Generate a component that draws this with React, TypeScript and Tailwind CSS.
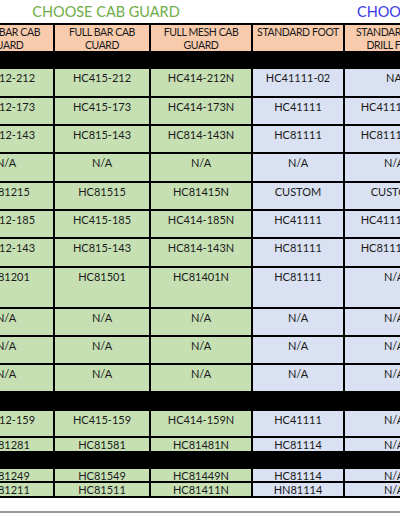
import React from 'react';

type Row =
  | { kind: 'bar'; h: number }
  | { kind: 'data'; h: number; cells: string[]; small?: boolean };

const widths = ['w-[96px]', 'w-[96px]', 'w-[102px]', 'w-[92px]', 'w-[100px]'];
const fills = ['bg-[#c6e0b4]', 'bg-[#c6e0b4]', 'bg-[#c6e0b4]', 'bg-[#d9e1f2]', 'bg-[#d9e1f2]'];

const rows: Row[] = [
  { kind: 'bar', h: 16 },
  { kind: 'data', h: 29, cells: ['HC412-212', 'HC415-212', 'HC414-212N', 'HC41111-02', 'NA'] },
  { kind: 'data', h: 28, cells: ['HC412-173', 'HC415-173', 'HC414-173N', 'HC41111', 'HC41111-PD'] },
  { kind: 'data', h: 28, cells: ['HC812-143', 'HC815-143', 'HC814-143N', 'HC81111', 'HC81111-PD'] },
  { kind: 'data', h: 29, cells: ['N/A', 'N/A', 'N/A', 'N/A', 'N/A'] },
  { kind: 'data', h: 28, cells: ['HC81215', 'HC81515', 'HC81415N', 'CUSTOM', 'CUSTOM'] },
  { kind: 'data', h: 28, cells: ['HC412-185', 'HC415-185', 'HC414-185N', 'HC41111', 'HC41111-PD'] },
  { kind: 'data', h: 29, cells: ['HC812-143', 'HC815-143', 'HC814-143N', 'HC81111', 'HC81111-PD'] },
  { kind: 'data', h: 41, cells: ['HC81201', 'HC81501', 'HC81401N', 'HC81111', 'N/A'] },
  { kind: 'data', h: 28, cells: ['N/A', 'N/A', 'N/A', 'N/A', 'N/A'] },
  { kind: 'data', h: 28, cells: ['N/A', 'N/A', 'N/A', 'N/A', 'N/A'] },
  { kind: 'data', h: 28, cells: ['N/A', 'N/A', 'N/A', 'N/A', 'N/A'] },
  { kind: 'bar', h: 18 },
  { kind: 'data', h: 27, cells: ['HC412-159', 'HC415-159', 'HC414-159N', 'HC41111', 'N/A'] },
  { kind: 'data', h: 15, small: true, cells: ['HC81281', 'HC81581', 'HC81481N', 'HC81114', 'N/A'] },
  { kind: 'bar', h: 16 },
  { kind: 'data', h: 14, small: true, cells: ['HC81249', 'HC81549', 'HC81449N', 'HC81114', 'N/A'] },
  { kind: 'data', h: 15, small: true, cells: ['HC81211', 'HC81511', 'HC81411N', 'HN81114', 'N/A'] },
];

const headers = [
  ['HALF BAR CAB', 'GUARD'],
  ['FULL BAR CAB', 'CUARD'],
  ['FULL MESH CAB', 'GUARD'],
  ['STANDARD FOOT'],
  ['STANDARD PRE-', 'DRILL FOOT'],
];

export default function App() {
  return (
    <div
      className="w-[400px] h-[516px] overflow-hidden bg-white text-[#1a1a1a]"
      style={{ fontFamily: 'Lato, "Liberation Sans", sans-serif' }}
    >
      <div className="ml-[-41px] w-[486px]">
        {/* titles */}
        <div className="flex h-[23px] items-center">
          <div className="w-[294px] shrink-0 text-center text-[14.5px] text-[#70ad47]">CHOOSE CAB GUARD</div>
          <div className="shrink-0 pl-[104px] text-[14.5px] text-[#3a3ae6] whitespace-nowrap">CHOOSE FOOT</div>
        </div>

        {/* header */}
        <div className="flex h-[30px] border-y-2 border-black">
          {headers.map((lines, i) => (
            <div
              key={i}
              className={`${widths[i]} shrink-0 border-r-2 border-black bg-[#f8cbad] pt-px text-center text-[10.5px] leading-[13px] tracking-[-0.4px] whitespace-nowrap`}
            >
              {lines.map((l, li) => (
                <div key={li}>{l}</div>
              ))}
            </div>
          ))}
        </div>

        {rows.map((r, ri) =>
          r.kind === 'bar' ? (
            <div key={ri} className="bg-black" style={{ height: r.h }} />
          ) : (
            <div key={ri} className="flex border-b-2 border-black" style={{ height: r.h }}>
              {r.cells.map((c, ci) => (
                <div
                  key={ci}
                  className={`${widths[ci]} ${fills[ci]} shrink-0 border-r-2 border-black text-center text-[11px] whitespace-nowrap ${
                    r.small ? 'leading-[13px]' : 'pt-[2px] leading-[13px]'
                  }`}
                >
                  {c}
                </div>
              ))}
            </div>
          )
        )}

        <div className="h-[13px]" />
        <div className="border-t-2 border-[#9a9a9a]" />
      </div>
    </div>
  );
}
